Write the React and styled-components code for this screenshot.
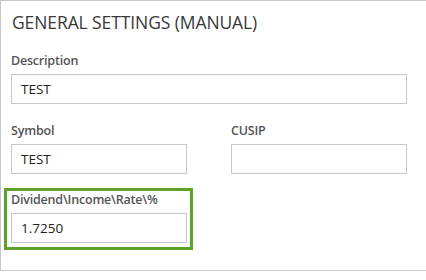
import styled, { createGlobalStyle } from "styled-components"

const GlobalStyle = createGlobalStyle`
  body {
    margin: 0;
    background: #ffffff;
    font-family: "Open Sans", "Noto Sans", sans-serif;
  }
`

const Panel = styled.div`
  width: 415px;
  height: 269px;
  border: 1px solid #c8c8c8;
  background: #fff;
  box-shadow: 3px 3px 4px rgba(0, 0, 0, 0.18);
  padding: 0 9px 0 10px;
  box-sizing: content-box;
`
const Title = styled.h2`
  margin: 0;
  padding: 10px 0 0 1px;
  font-size: 17.5px;
  line-height: 22px;
  font-weight: 400;
  color: #383838;
  letter-spacing: -0.1px;
`
const Grid = styled.div`
  display: grid;
  grid-template-columns: 176px 176px;
  column-gap: 44px;
  margin-top: 20px;
  row-gap: 19px;
`
const Field = styled.div`
  grid-column: ${props => (props.$full ? "1 / span 2" : "auto")};
  display: flex;
  flex-direction: column;
`
const Highlight = styled.div`
  border: 3px solid #5ea12b;
  margin: -5px -6px -7px -7px;
  padding: 1px 3px 4px 4px;
  display: flex;
  flex-direction: column;
`
const Label = styled.label`
  font-size: 12.5px;
  line-height: 16px;
  font-weight: 600;
  color: #555;
  margin-bottom: 5px;
  letter-spacing: -0.2px;
`
const Input = styled.div`
  height: 28px;
  border: 1px solid #c8c8c8;
  padding: 0 9px;
  display: flex;
  align-items: center;
  font-size: 13.5px;
  color: #222;
`

const App = () => {
  return (
    <>
      <GlobalStyle />
      <Panel>
        <Title>GENERAL SETTINGS (MANUAL)</Title>
        <Grid>
          <Field $full>
            <Label>Description</Label>
            <Input>TEST</Input>
          </Field>
          <Field>
            <Label>Symbol</Label>
            <Input>TEST</Input>
          </Field>
          <Field>
            <Label>CUSIP</Label>
            <Input />
          </Field>
          <Field>
            <Highlight>
              <Label>Dividend\Income\Rate\%</Label>
              <Input>1.7250</Input>
            </Highlight>
          </Field>
        </Grid>
      </Panel>
    </>
  )
}

export default App
